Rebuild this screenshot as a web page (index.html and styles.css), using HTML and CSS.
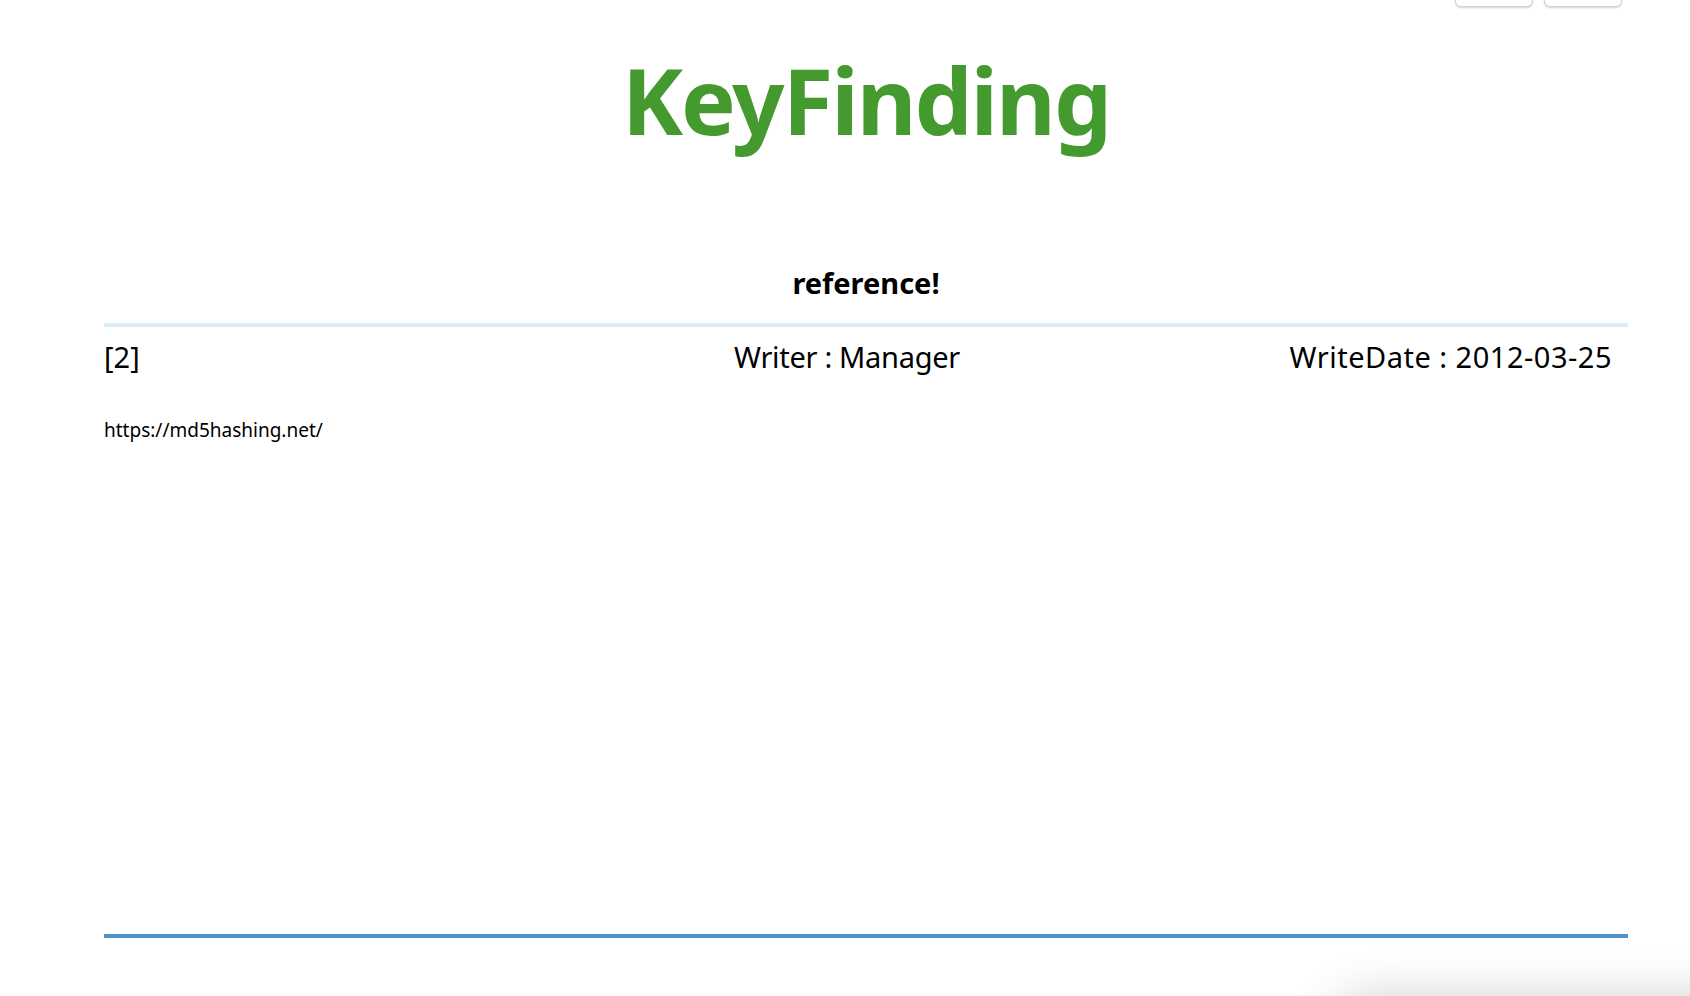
FILE: index.html
```html
<!DOCTYPE html>
<html lang="ko">
<head>
<meta charset="utf-8">
<title>KeyFinding</title>
<link rel="stylesheet" href="styles.css">
</head>
<body>
<div class="toolbar">
  <button class="btn" type="button">Login</button>
  <button class="btn" type="button">Join</button>
</div>
<main class="page">
  <h1 class="logo">KeyFinding</h1>
  <h2 class="post-title">reference!</h2>
  <div class="meta">
    <span class="meta-no">[2]</span>
    <span class="meta-writer">Writer : Manager</span>
    <span class="meta-date">WriteDate : 2012-03-25</span>
  </div>
  <div class="post-body">https://md5hashing.net/</div>
  <div class="post-end"></div>
</main>
<div class="float-card"></div>
</body>
</html>
```
FILE: styles.css
```css
html, body {
  margin: 0;
  padding: 0;
  background: #ffffff;
  overflow: hidden;
}
body {
  font-family: "Noto Sans", "Open Sans", sans-serif;
  color: #000;
  height: 996px;
}
.toolbar {
  display: flex;
  justify-content: flex-end;
  gap: 11px;
  padding-right: 68px;
  margin-top: -25px;
}
.btn {
  width: 78px;
  height: 32px;
  border: 1px solid #d2d2d2;
  border-radius: 6px;
  background: #fff;
  box-shadow: 0 1px 2px rgba(0,0,0,0.18);
  font-family: inherit;
  font-size: 14px;
  line-height: 14px;
  padding: 0 0 12px;
  color: #333;
}
.page {
  width: 1524px;
  margin-left: 104px;
  display: flex;
  flex-direction: column;
}
.logo {
  margin: 47px 0 0;
  font-size: 92px;
  line-height: 92px;
  font-weight: 700;
  color: #449a2e;
  text-align: center;
  letter-spacing: -2px;
}
.post-title {
  margin: 117px 0 0;
  font-size: 29px;
  line-height: 40px;
  font-weight: 700;
  text-align: center;
  border-bottom: 4px solid #daeef9;
  padding-bottom: 20px;
}
.meta {
  display: grid;
  grid-template-columns: 630px auto 1fr;
  align-items: center;
  font-size: 29px;
  line-height: 40px;
  margin-top: 10px;
  padding-right: 16px;
}
.meta-writer {
  letter-spacing: -0.3px;
}
.meta-date {
  text-align: right;
  letter-spacing: 0.5px;
}
.post-body {
  margin-top: 39px;
  font-size: 19px;
  line-height: 28px;
  height: 518px;
}
.post-end {
  border-top: 4px solid #4f94cc;
}
.float-card {
  position: fixed;
  left: 1330px;
  top: 998px;
  width: 440px;
  height: 120px;
  border-radius: 40px;
  background: #fff;
  box-shadow: 0 0 50px rgba(0,0,0,0.2);
}
```
